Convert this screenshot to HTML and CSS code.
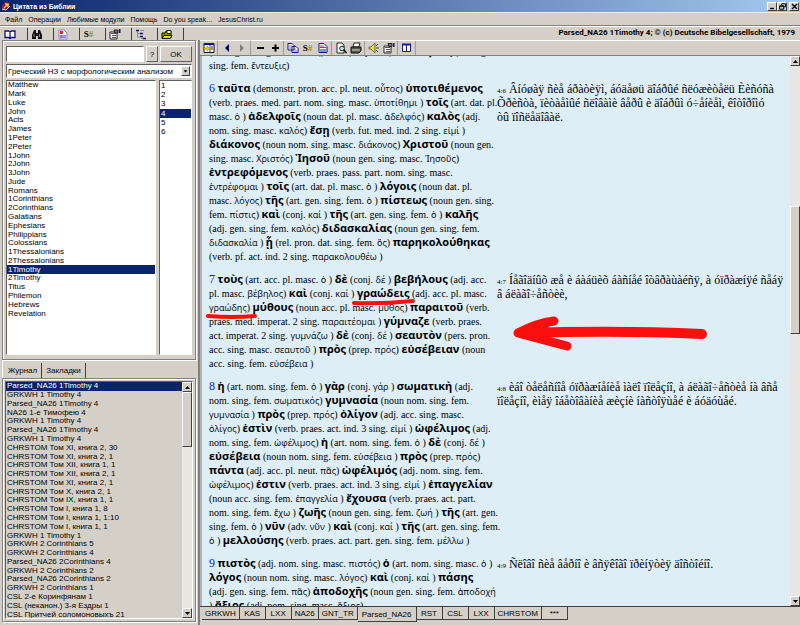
FILE: index.html
```html
<!DOCTYPE html>
<html lang="ru">
<head>
<meta charset="utf-8">
<title>Цитата из Библии</title>
<link rel="stylesheet" href="styles.css">
</head>
<body>
<header class="titlebar">
  <svg class="app-icon" width="10" height="10" viewBox="0 0 10 10"><path d="M1 5 4 1 9 2 8 6 5 9 1 8Z" fill="#8c1b4c"/><path d="M1 8 5 9 9 5" fill="none" stroke="#f3d9c8"/><path d="M3 7 7 3M4 3h3v3" fill="none" stroke="#ffc928" stroke-width="1.4"/></svg>
  <h1>Цитата из Библии</h1>
  <div class="window-buttons">
    <button aria-label="Свернуть"><svg width="7" height="7"><path d="M1 5.5h4" stroke="#000" stroke-width="1.4"/></svg></button>
    <button aria-label="Восстановить"><svg width="7" height="7"><path d="M2.5 2V.8h4v3H5M.7 2.8h4v3.4h-4zM.7 3.3h4" fill="none" stroke="#000"/></svg></button>
    <button class="close" aria-label="Закрыть"><svg width="7" height="7"><path d="m1 1 5 5M6 1 1 6" stroke="#000" stroke-width="1.4"/></svg></button>
  </div>
</header>
<nav class="menubar">
  <button>Файл</button><button>Операции</button><button>Любимые модули</button><button>Помощь</button><button>Do you speak...</button><button>JesusChrist.ru</button>
</nav>
<div class="tabrow">
  <div class="icon-tabs">
    <button class="active" aria-label="Книга"><svg width="12" height="11" viewBox="0 0 12 11"><path d="M1 2h3.5L6 3l1.500-1H11v6.500H7.500L6 9.500l-1.500-1H1zM6 3v6" fill="#fff" stroke="#11117a" stroke-width="1.300"/></svg></button>
    <button aria-label="Поиск"><svg width="12" height="11" viewBox="0 0 12 11"><path d="M3 1h2v3h2V1h2l2 5v4H7V7H5v3H1V6z" fill="#111"/><path d="M3 5v3M8.500 5v3" stroke="#bbb" stroke-width=".7"/></svg></button>
    <button aria-label="Словари"><svg width="12" height="11" viewBox="0 0 12 11"><path d="M2 1h5l3 3v6H2z" fill="#fff" stroke="#7886cc"/><path d="M3 2h3v3H3z" fill="#e32222"/><path d="M3 6h6v3H3z" fill="#8c97e8"/><path d="M4 6v3" stroke="#dd3030"/></svg></button>
    <button class="strong" aria-label="Номера Стронга">S<span>#</span></button>
    <button aria-label="Свойства"><svg width="12" height="11" viewBox="0 0 12 11"><path d="M1 3h7v7H1z" fill="#fff" stroke="#222"/><path d="M2 4.500h5M3 6.500h4M3 8.500h4" stroke="#555"/><path d="M5 1h4v3H6z" fill="#777" stroke="#222"/><path d="M10 0h1.500v4H10z" fill="#11117a"/></svg></button>
    <button aria-label="Дерево"><svg width="12" height="11" viewBox="0 0 12 11"><path d="M1 1.500h3M5 4.500h3M5 7.500h3M8 9.500h3" stroke="#11117a" stroke-width="1.300"/><path d="M2.500 2v6H5M2.500 4.500H5M6.500 8v1.500H8M5 1.500h4" fill="none" stroke="#888"/></svg></button>
    <button aria-label="Открыть"><svg width="12" height="11" viewBox="0 0 12 11"><path d="M1 9V4h3l1-2h5v7z" fill="#8c8b12" stroke="#111"/><path d="M6 1.500h4v3H6z" fill="#fff" stroke="#222"/><path d="m1 9.500 2-3h8l-2 3z" fill="#dbd84a" stroke="#111"/></svg></button>
  </div>
  <p class="copyright">Parsed_NA26 1Timothy 4; © (c) Deutsche Bibelgesellschaft, 1979</p>
</div>
<main class="workspace">
  <aside class="side">
    <section class="frame picker">
      <div class="goto">
        <input type="text" aria-label="Адрес"><button>?</button><button class="ok">OK</button>
      </div>
      <div class="combo">
        <select aria-label="Модуль"><option>Греческий НЗ с морфологическим анализом</option></select>
        <svg class="combo-arrow" width="9" height="10" viewBox="0 0 9 10"><path d="M2 4h5L4.500 7z"/></svg>
      </div>
      <div class="lists">
        <div class="box books"><ul class="rows">
          <li><button>Matthew</button></li><li><button>Mark</button></li><li><button>Luke</button></li><li><button>John</button></li><li><button>Acts</button></li><li><button>James</button></li><li><button>1Peter</button></li><li><button>2Peter</button></li><li><button>1John</button></li><li><button>2John</button></li><li><button>3John</button></li><li><button>Jude</button></li><li><button>Romans</button></li><li><button>1Corinthians</button></li><li><button>2Corinthians</button></li><li><button>Galatians</button></li><li><button>Ephesians</button></li><li><button>Philippians</button></li><li><button>Colossians</button></li><li><button>1Thessalonians</button></li><li><button>2Thessalonians</button></li><li class="selected"><button>1Timothy</button></li><li><button>2Timothy</button></li><li><button>Titus</button></li><li><button>Philemon</button></li><li><button>Hebrews</button></li><li><button>Revelation</button></li>
        </ul></div>
        <div class="box chapters"><ul class="rows">
          <li><button>1</button></li><li><button>2</button></li><li><button>3</button></li><li class="selected"><button>4</button></li><li><button>5</button></li><li><button>6</button></li>
        </ul></div>
      </div>
    </section>
    <div class="side-tabs"><button class="active">Журнал</button><button>Закладки</button></div>
    <section class="frame journal">
      <div class="box"><ul class="rows">
        <li class="selected"><button>Parsed_NA26 1Timothy 4</button></li><li><button>GRKWH 1 Timothy 4</button></li><li><button>Parsed_NA26 1Timothy 4</button></li><li><button>NA26 1-е Тимофею 4</button></li><li><button>GRKWH 1 Timothy 4</button></li><li><button>Parsed_NA26 1Timothy 4</button></li><li><button>GRKWH 1 Timothy 4</button></li><li><button>CHRSTOM Том XI, книга 2, 30</button></li><li><button>CHRSTOM Том XI, книга 2, 1</button></li><li><button>CHRSTOM Том XII, книга 1, 1</button></li><li><button>CHRSTOM Том XII, книга 2, 1</button></li><li><button>CHRSTOM Том XI, книга 2, 1</button></li><li><button>CHRSTOM Том X, книга 2, 1</button></li><li><button>CHRSTOM Том IX, книга 1, 1</button></li><li><button>CHRSTOM Том I, книга 1, 8</button></li><li><button>CHRSTOM Том I, книга 1, 1:10</button></li><li><button>CHRSTOM Том I, книга 1, 1</button></li><li><button>GRKWH 1 Timothy 1</button></li><li><button>GRKWH 2 Corinthians 5</button></li><li><button>GRKWH 2 Corinthians 4</button></li><li><button>Parsed_NA26 2Corinthians 4</button></li><li><button>GRKWH 2 Corinthians 2</button></li><li><button>Parsed_NA26 2Corinthians 2</button></li><li><button>GRKWH 2 Corinthians 1</button></li><li><button>CSL 2-е Коринфянам 1</button></li><li><button>CSL (неканон.) 3-я Ездры 1</button></li><li><button>CSL Притчей соломоновыхъ 21</button></li>
      </ul>
      <div class="scrollbar">
        <button aria-label="Вверх"><svg width="7" height="7"><path d="M1 5h5L3.500 2z"/></svg></button>
        <div class="thumb"></div><div class="track"></div>
        <button aria-label="Вниз"><svg width="7" height="7"><path d="M1 2h5L3.500 5z"/></svg></button>
      </div></div>
    </section>
  </aside>
  <section class="reader">
    <div class="toolbar">
      <div class="group"><button aria-label="Панель"><svg width="12" height="12" viewBox="0 0 12 12"><path d="M1 1.500h10v9H1z" fill="#fff" stroke="#111"/><path d="M1 2h10" stroke="#11117a" stroke-width="2"/><path d="M7 3v8M8 5h2M8 7h2" stroke="#333"/><path d="M1 6h3V4l2.500 2.500L4 9V7H1z" fill="#f5d800" stroke="#8c7b00" stroke-width=".5"/></svg></button></div>
      <div class="group"><button aria-label="Назад"><svg width="12" height="12"><path d="M8 2v8L4 6z" fill="#00007a"/></svg></button><button aria-label="Вперёд"><svg width="12" height="12"><path d="M4 2v8l4-4z" fill="#808080"/></svg></button></div>
      <div class="group"><button aria-label="Мельче"><svg width="12" height="12"><path d="M3 6h7" stroke="#000" stroke-width="2"/></svg></button><button aria-label="Крупнее"><svg width="12" height="12"><path d="M3 6h7M6.500 2.500v7" stroke="#000" stroke-width="2"/></svg></button></div>
      <div class="group"><button aria-label="Копировать"><svg width="12" height="12" viewBox="0 0 12 12"><path d="M1 1.500h4l2 2V8H1zM5 4.500h4l2 2v4H5z" fill="#fff" stroke="#11117a"/><path d="M2 4h3M2 6h3M6 7h3M6 9h4" stroke="#666" stroke-width=".8"/></svg></button><button class="strong" aria-label="Номера Стронга">S<span>#</span></button><button aria-label="Заметка"><svg width="12" height="12" viewBox="0 0 12 12"><path d="M2 1.500h5l3 3v6H2z" fill="#fff" stroke="#11117a"/><path d="M3 4h4M3 5.500h6" stroke="#dd2222"/><path d="M3 7h6v3H3z" fill="#8490dd"/></svg></button></div>
      <div class="group"><button aria-label="Просмотр"><svg width="12" height="12" viewBox="0 0 12 12"><path d="M2 1h5l2 2v8H2z" fill="#fff" stroke="#222"/><circle cx="7" cy="6.500" r="2.300" fill="#b5ece8" stroke="#222"/><path d="m9 8 2.500 3" stroke="#000" stroke-width="1.500"/></svg></button><button aria-label="Печать"><svg width="12" height="12" viewBox="0 0 12 12"><path d="m3 5 1-4h6L9 5z" fill="#fff" stroke="#222"/><path d="M1 5h10v4l-2 2H1z" fill="#555" stroke="#111"/><path d="M2 8h6" stroke="#ddd"/><path d="M8 8h2" stroke="#dfd43c"/></svg></button></div>
      <div class="group"><button aria-label="Звук"><svg width="12" height="12" viewBox="0 0 12 12"><path d="M1 5h2l4-4v10L3 7H1z" fill="#e8e020" stroke="#555" stroke-width=".8"/><path d="m8 4 2-2M8 6h3M8 8l2 2" stroke="#444"/></svg></button><button aria-label="Свойства"><svg width="12" height="12" viewBox="0 0 12 12"><path d="M1 4h7v7H1z" fill="#fff" stroke="#222"/><path d="M2 5.500h5M3 7.500h4M3 9.500h4" stroke="#555"/><path d="M5 1.500h4v3H6z" fill="#777" stroke="#222"/><path d="M10 1h1.500v4H10z" fill="#11117a"/></svg></button></div>
      <div class="group"><button aria-label="Две колонки"><svg width="12" height="12" viewBox="0 0 12 12"><path d="M1.500 2.500h8v7h-8zM5.500 2v8" fill="#fff" stroke="#1717a0"/><path d="M1 2.500h9" stroke="#1717a0" stroke-width="2"/></svg></button></div>
    </div>
    <div class="page">
      <div class="scroll-area">
        <article class="verses">
          <p class="greek">(noun gen. sing. masc. <i>θεός</i>) <b>καὶ</b> (conj. <i>καί</i> ) <b>ἐντεύξεως</b> (noun gen.<br>sing. fem. <i>ἔντευξις</i>)</p>
          <p class="russian"></p>
          <p class="greek"><a href="#v6">6</a> <b>ταῦτα</b> (demonstr. pron. acc. pl. neut. <i>οὗτος</i>) <b>ὑποτιθέμενος</b><br>(verb. praes. med. part. nom. sing. masc. <i>ὑποτίθημι</i> ) <b>τοῖς</b> (art. dat. pl.<br>masc. <i>ὁ</i> ) <b>ἀδελφοῖς</b> (noun dat. pl. masc. <i>ἀδελφός</i>) <b>καλὸς</b> (adj.<br>nom. sing. masc. <i>καλός</i>) <b>ἔσῃ</b> (verb. fut. med. ind. 2 sing. <i>εἰμί</i> )<br><b>διάκονος</b> (noun nom. sing. masc. <i>διάκονος</i>) <b>Χριστοῦ</b> (noun gen.<br>sing. masc. <i>Χριστός</i>) <b>Ἰησοῦ</b> (noun gen. sing. masc. <i>Ἰησοῦς</i>)<br><b>ἐντρεφόμενος</b> (verb. praes. pass. part. nom. sing. masc.<br><i>ἐντρέφομαι</i> ) <b>τοῖς</b> (art. dat. pl. masc. <i>ὁ</i> ) <b>λόγοις</b> (noun dat. pl.<br>masc. <i>λόγος</i>) <b>τῆς</b> (art. gen. sing. fem. <i>ὁ</i> ) <b>πίστεως</b> (noun gen. sing.<br>fem. <i>πίστις</i>) <b>καὶ</b> (conj. <i>καί</i> ) <b>τῆς</b> (art. gen. sing. fem. <i>ὁ</i> ) <b>καλῆς</b><br>(adj. gen. sing. fem. <i>καλός</i>) <b>διδασκαλίας</b> (noun gen. sing. fem.<br><i>διδασκαλία</i> ) <b>ᾗ</b> (rel. pron. dat. sing. fem. <i>ὅς</i>) <b>παρηκολούθηκας</b><br>(verb. pf. act. ind. 2 sing. <i>παρακολουθέω</i> )</p>
          <p class="russian"><small>4:6</small> Âíóøàÿ ñèå áðàòèÿì, áóäåøü äîáðûé ñëóæèòåëü Èèñóñà<br>Õðèñòà, ïèòàåìûé ñëîâàìè âåðû è äîáðûì ó÷åíèåì, êîòîðîìó<br>òû ïîñëåäîâàë.</p>
          <p class="greek"><a href="#v7">7</a> <b>τοὺς</b> (art. acc. pl. masc. <i>ὁ</i> ) <b>δὲ</b> (conj. <i>δέ</i> ) <b>βεβήλους</b> (adj. acc.<br>pl. masc. <i>βέβηλος</i>) <b>καὶ</b> (conj. <i>καί</i> ) <b>γραώδεις</b> (adj. acc. pl. masc.<br><i>γραώδης</i>) <b>μύθους</b> (noun acc. pl. masc. <i>μῦθος</i>) <b>παραιτοῦ</b> (verb.<br>praes. med. imperat. 2 sing. <i>παραιτέομαι</i> ) <b>γύμναζε</b> (verb. praes.<br>act. imperat. 2 sing. <i>γυμνάζω</i> ) <b>δὲ</b> (conj. <i>δέ</i> ) <b>σεαυτὸν</b> (pers. pron.<br>acc. sing. masc. <i>σεαυτοῦ</i> ) <b>πρὸς</b> (prep. <i>πρός</i>) <b>εὐσέβειαν</b> (noun<br>acc. sing. fem. <i>εὐσέβεια</i> )</p>
          <p class="russian"><small>4:7</small> Íåãîäíûõ æå è áàáüèõ áàñíåé îòâðàùàéñÿ, à óïðàæíÿé ñåáÿ<br>â áëàãî÷åñòèè,</p>
          <p class="greek"><a href="#v8">8</a> <b>ἡ</b> (art. nom. sing. fem. <i>ὁ</i> ) <b>γὰρ</b> (conj. <i>γάρ</i> ) <b>σωματικὴ</b> (adj.<br>nom. sing. fem. <i>σωματικός</i>) <b>γυμνασία</b> (noun nom. sing. fem.<br><i>γυμνασία</i> ) <b>πρὸς</b> (prep. <i>πρός</i>) <b>ὀλίγον</b> (adj. acc. sing. masc.<br><i>ὀλίγος</i>) <b>ἐστὶν</b> (verb. praes. act. ind. 3 sing. <i>εἰμί</i> ) <b>ὠφέλιμος</b> (adj.<br>nom. sing. fem. <i>ὠφέλιμος</i>) <b>ἡ</b> (art. nom. sing. fem. <i>ὁ</i> ) <b>δὲ</b> (conj. <i>δέ</i> )<br><b>εὐσέβεια</b> (noun nom. sing. fem. <i>εὐσέβεια</i> ) <b>πρὸς</b> (prep. <i>πρός</i>)<br><b>πάντα</b> (adj. acc. pl. neut. <i>πᾶς</i>) <b>ὠφέλιμός</b> (adj. nom. sing. fem.<br><i>ὠφέλιμος</i>) <b>ἐστιν</b> (verb. praes. act. ind. 3 sing. <i>εἰμί</i> ) <b>ἐπαγγελίαν</b><br>(noun acc. sing. fem. <i>ἐπαγγελία</i> ) <b>ἔχουσα</b> (verb. praes. act. part.<br>nom. sing. fem. <i>ἔχω</i> ) <b>ζωῆς</b> (noun gen. sing. fem. <i>ζωή</i> ) <b>τῆς</b> (art. gen.<br>sing. fem. <i>ὁ</i> ) <b>νῦν</b> (adv. <i>νῦν</i> ) <b>καὶ</b> (conj. <i>καί</i> ) <b>τῆς</b> (art. gen. sing. fem.<br><i>ὁ</i> ) <b>μελλούσης</b> (verb. praes. act. part. gen. sing. fem. <i>μέλλω</i> )</p>
          <p class="russian"><small>4:8</small> èáî òåëåñíîå óïðàæíåíèå ìàëî ïîëåçíî, à áëàãî÷åñòèå íà âñå<br>ïîëåçíî, èìåÿ îáåòîâàíèå æèçíè íàñòîÿùåé è áóäóùåé.</p>
          <p class="greek"><a href="#v9">9</a> <b>πιστὸς</b> (adj. nom. sing. masc. <i>πιστός</i>) <b>ὁ</b> (art. nom. sing. masc. <i>ὁ</i> )<br><b>λόγος</b> (noun nom. sing. masc. <i>λόγος</i>) <b>καὶ</b> (conj. <i>καί</i> ) <b>πάσης</b><br>(adj. gen. sing. fem. <i>πᾶς</i>) <b>ἀποδοχῆς</b> (noun gen. sing. fem. <i>ἀποδοχή</i><br>) <b>ἄξιος</b> (adj. nom. sing. masc. <i>ἄξιος</i>)</p>
          <p class="russian"><small>4:9</small> Ñëîâî ñèå âåðíî è âñÿêîãî ïðèíÿòèÿ äîñòîéíî.</p>
        </article>
      </div>
      <div class="scrollbar main-scroll">
        <button aria-label="Вверх"><svg width="7" height="7"><path d="M1 5h5L3.500 2z"/></svg></button>
        <div class="track above"></div><div class="thumb"></div><div class="track"></div>
        <button aria-label="Вниз"><svg width="7" height="7"><path d="M1 2h5L3.500 5z"/></svg></button>
      </div>
      <svg class="marks" width="510" height="100" viewBox="0 0 510 100" fill="none" stroke="#fb0f0c" stroke-linecap="round" stroke-linejoin="round">
        <path d="M152 17Q180 18 211 15" stroke-width="4"/>
        <path d="M6 30Q30 32 53 30" stroke-width="4"/>
        <path d="M500 48Q420 44 320 47" stroke-width="10"/>
        <path d="M352 35Q335 37 316 47Q338 53 365 60" stroke-width="9"/>
        <path d="M318 47 345 39V54Z" fill="#fb0f0c" stroke-width="3"/>
      </svg>
    </div>
    <div class="module-tabs">
      <button>GRKWH</button><button>KAS</button><button>LXX</button><button>NA26</button><button>GNT_TR</button><button class="active">Parsed_NA26</button><button>RST</button><button>CSL</button><button>LXX</button><button>CHRSTOM</button><button>***</button>
    </div>
  </section>
</main>
</body>
</html>
```
FILE: styles.css
```css
* { box-sizing: border-box; }

body {
  margin: 0;
  height: 100vh;
  display: flex;
  flex-direction: column;
  overflow: hidden;
  background: #d4d0c8;
  color: #000;
  font: 8px/9px "Liberation Sans", sans-serif;
}

button, input, select { font: inherit; color: inherit; }
button { margin: 0; padding: 0; border: 0; background: none; white-space: nowrap; }
svg { display: block; flex: none; }
h1, p, ul { margin: 0; padding: 0; }
ul { list-style: none; }

/* Title and menu */
.titlebar {
  display: flex;
  align-items: center;
  height: 12px;
  padding: 0 1px;
  gap: 2px;
  background: linear-gradient(90deg, #0a246a, #a6caf0);
}
.titlebar h1 { flex: 1; font-size: 7px; font-weight: bold; color: #fff; }
.window-buttons { display: flex; }
.window-buttons button {
  display: grid;
  place-items: center;
  width: 10px;
  height: 9px;
  background: #d4d0c8;
  border: 1px solid;
  border-color: #fff #404040 #404040 #fff;
}
.window-buttons .close { margin-left: 2px; }

.menubar {
  display: flex;
  gap: 6px;
  height: 14px;
  padding: 1px 5px 0;
  border-top: 1px solid #eceae5;
  border-bottom: 1px solid #808080;
  font-size: 7px;
}

.tabrow { display: flex; justify-content: space-between; height: 14px; border-top: 1px solid #fff; }
.icon-tabs { display: flex; }
.icon-tabs button {
  display: grid;
  place-items: center;
  width: 26px;
  margin-top: 1px;
  padding-right: 8px;
  border-right: 1px solid #404040;
}
.icon-tabs .active { width: 28px; }
.copyright { padding: 1px 5px 0; font: bold 8px/9px Roboto, sans-serif; }
.strong { font: bold 9px/11px "Liberation Serif", serif; }
.icon-tabs .strong, .group .strong { display: block; font: bold 9px/11px "Liberation Serif", serif; }
.strong span { color: #8c8b12; }

/* Layout */
.workspace { flex: 1; min-height: 0; display: grid; grid-template-columns: 200px 1fr; }
.side { display: flex; flex-direction: column; min-height: 0; padding: 0 2px 3px; border-right: 2px solid #808080; }
.frame { border: 1px solid #808080; box-shadow: inset 1px 1px #fff, 1px 1px #fff; }
.picker { display: flex; flex-direction: column; height: 320px; padding: 5px 3px 4px; }

.goto { display: flex; gap: 2px; height: 16px; }
.goto input { flex: 1; min-width: 0; }
.goto input, .combo, .box { border: 1px solid; border-color: #606060 #fff #fff #606060; background: #fff; }
.goto button { width: 12px; border: 1px solid; border-color: #fff #606060 #606060 #fff; }
.goto .ok { width: 32px; }

.combo { position: relative; height: 14px; margin: 2px 0; }
.combo select { display: block; width: 100%; height: 12px; padding: 0 1px; border: 0; background: #fff; appearance: none; }
.combo-arrow {
  position: absolute;
  top: 1px;
  right: 1px;
  background: #d4d0c8;
  border: 1px solid;
  border-color: #fff #404040 #404040 #fff;
  pointer-events: none;
}

.lists { flex: 1; display: flex; gap: 3px; min-height: 0; }
.books { flex: 1; }
.chapters { width: 33px; }
.rows { display: grid; grid-auto-rows: 1fr; }
.rows li { min-height: 0; padding-left: 1px; display: flex; align-items: center; }
.rows button { line-height: 8px; }
.rows .selected { background: #0a246a; color: #fff; }
.books .rows { height: 237px; }
.chapters .rows { height: 56px; }

.side-tabs { display: flex; height: 18px; padding: 3px 0 0 1px; border-left: 1px solid #fff; }
.side-tabs button { padding: 0 4px; border-right: 1px solid #404040; line-height: 12px; }
.journal { flex: 1; min-height: 0; padding: 2px; }
.journal .box { display: flex; height: 100%; overflow: hidden; background: #d4d0c8; }
.journal .rows { flex: 1; height: 237px; }

.scrollbar { display: flex; flex-direction: column; width: 10px; }
.scrollbar button, .thumb { background: #d4d0c8; border: 1px solid; border-color: #fff #404040 #404040 #fff; }
.scrollbar button { display: grid; place-items: center; height: 10px; }
.thumb { height: 55px; }
.track { flex: 1; background: #e9e7e1; }

/* Reader */
.reader { min-width: 0; min-height: 0; display: flex; flex-direction: column; }
.toolbar { display: flex; height: 16px; border-top: 1px solid #fff; border-bottom: 1px solid #808080; }
.group { display: flex; align-items: center; gap: 2px; padding: 0 2px; border-right: 1px solid #a09c94; }
.group button { display: grid; place-items: center; width: 13px; }

.page { position: relative; flex: 1; min-height: 0; display: flex; border-left: 2px solid #b5b2aa; }
.scroll-area { flex: 1; min-width: 0; overflow: hidden; background: #ddeef6; }
.verses {
  display: grid;
  grid-template-columns: 288px 1fr;
  row-gap: 9px;
  margin-top: -11px;
  padding-left: 7px;
  white-space: nowrap;
  line-height: 14px;
}
.greek { font-family: "Liberation Serif", serif; font-size: 10px; }
.greek a { color: #1515f0; font-size: 12px; text-decoration: none; line-height: 1px; }
.greek b, .greek i { font-family: "Open Sans", "Noto Sans", sans-serif; font-style: normal; line-height: 1px; }
.greek b { font-size: 11px; }
.greek i { font-size: 9px; }
.russian { font-family: "Liberation Serif", serif; font-size: 12px; }
.russian small { font-size: 7px; line-height: 1px; }

.main-scroll .above { flex: 0 0 140px; }
.main-scroll .thumb { height: 128px; }
.marks { position: absolute; top: 230px; left: 0; pointer-events: none; }

.module-tabs { display: flex; align-items: flex-start; height: 19px; padding-left: 2px; border-top: 1px solid #404040; }
.module-tabs button { min-width: 26px; height: 13px; padding: 0 3px; border-right: 1px solid #404040; border-bottom: 1px solid #404040; }
.module-tabs .active { height: 15px; padding: 0 4px; }
```
